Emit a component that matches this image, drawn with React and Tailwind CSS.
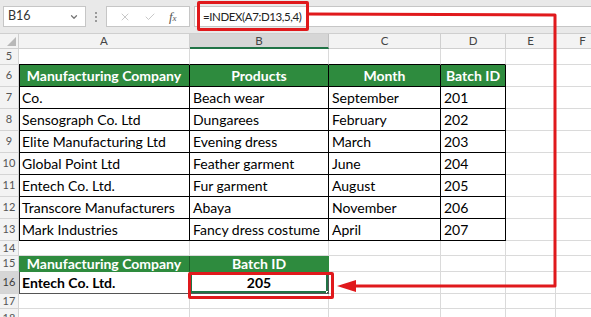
import { ChevronDown, X, Check } from "lucide-react";

const cols = [
  { key: "A", w: 171 },
  { key: "B", w: 139 },
  { key: "C", w: 112 },
  { key: "D", w: 65 },
  { key: "E", w: 50 },
  { key: "F", w: 54 },
];

const data = [
  ["Co.", "Beach wear", "September", "201"],
  ["Sensograph Co. Ltd", "Dungarees", "February", "202"],
  ["Elite Manufacturing Ltd", "Evening dress", "March", "203"],
  ["Global Point Ltd", "Feather garment", "June", "204"],
  ["Entech Co. Ltd.", "Fur garment", "August", "205"],
  ["Transcore Manufacturers", "Abaya", "November", "206"],
  ["Mark Industries", "Fancy dress costume", "April", "207"],
];

const font = { fontFamily: "Lato, 'Open Sans', sans-serif" };

function RowNum({ n, h, active }) {
  return (
    <div
      className={`w-[19px] shrink-0 flex items-center justify-center text-[11px] border-r border-b border-[#d4d4d4] ${
        active ? "bg-[#d6d6d6] text-[#3b3b3b]" : "bg-[#f3f3f3] text-[#555]"
      }`}
      style={{ height: h }}
    >
      {n}
    </div>
  );
}

function Cell({ w, children, className = "" }) {
  return (
    <div
      className={`shrink-0 flex items-center px-[3px] overflow-hidden whitespace-nowrap border-r border-b ${className}`}
      style={{ width: w }}
    >
      {children}
    </div>
  );
}

function EmptyCells({ from = 0 }) {
  return cols.slice(from).map((c) => (
    <Cell key={c.key} w={c.w} className="border-[#dadada]" />
  ));
}

export default function App() {
  return (
    <div className="relative w-[591px] h-[317px] overflow-hidden bg-white text-black" style={font}>
      {/* formula toolbar */}
      <div className="h-[34px] bg-[#e9e9e9] flex items-center border-b border-[#cfcfcf]">
        <div className="ml-[3px] w-[83px] h-[21px] bg-white border border-[#c6c6c6] flex items-center justify-between pl-[4px] pr-[6px] text-[12.5px] text-[#333]">
          <span>B16</span>
          <ChevronDown size={10} strokeWidth={3} className="text-[#777]" />
        </div>
        <div className="w-[20px] flex flex-col items-center gap-[2px]">
          <span className="w-[2px] h-[2px] bg-[#9a9a9a]" />
          <span className="w-[2px] h-[2px] bg-[#9a9a9a]" />
          <span className="w-[2px] h-[2px] bg-[#9a9a9a]" />
        </div>
        <div className="w-[84px] h-[21px] bg-white border border-[#c6c6c6] flex items-center justify-around px-[6px] text-[#b5b5b5]">
          <X size={12} strokeWidth={1.5} />
          <Check size={12} strokeWidth={1.5} />
          <span className="italic text-[13px] text-[#555]" style={{ fontFamily: "'Liberation Serif', serif" }}>
            f<span className="text-[9px]">x</span>
          </span>
        </div>
        <div className="ml-[4px] flex-1 h-[21px] bg-white border-y border-l border-[#c6c6c6] flex items-center pl-[8px] text-[11.5px] tracking-[-0.4px] text-[#222]">
          =INDEX(A7:D13,5,4)
        </div>
      </div>

      {/* column headers */}
      <div className="flex h-[15px] bg-[#f3f3f3] text-[11.5px] text-[#444]">
        <div className="w-[19px] shrink-0 border-r border-b border-[#cfcfcf] relative">
          <div className="absolute right-[2px] bottom-[2px] w-0 h-0 border-l-[9px] border-l-transparent border-b-[9px] border-b-[#b8b8b8]" />
        </div>
        {cols.map((c) => (
          <div
            key={c.key}
            className={`shrink-0 flex items-center justify-center border-r ${
              c.key === "B" ? "bg-[#d6d6d6] border-b-2 border-b-[#217346] border-r-[#c0c0c0]" : "border-b border-[#cfcfcf]"
            }`}
            style={{ width: c.w }}
          >
            {c.key}
          </div>
        ))}
        <div className="flex-1 border-b border-[#cfcfcf]" />
      </div>

      {/* row 5 */}
      <div className="flex h-[16px]">
        <RowNum n={5} h={16} />
        {cols.map((c, i) => (
          <Cell key={c.key} w={c.w} className={i < 4 ? "border-[#dadada] border-b-black" : "border-[#dadada]"} />
        ))}
      </div>

      {/* row 6 header */}
      <div className="flex h-[22px]">
        <RowNum n={6} h={22} />
        {["Manufacturing Company", "Products", "Month", "Batch ID"].map((t, i) => (
          <Cell
            key={t}
            w={cols[i].w}
            className={`justify-center bg-[#2e8b3e] text-white font-bold text-[14px] border-black ${i === 0 ? "shadow-[inset_1px_0_0_#000]" : ""}`}
          >
            {t}
          </Cell>
        ))}
        <EmptyCells from={4} />
      </div>

      {/* rows 7-13 */}
      {data.map((r, ri) => (
        <div key={ri} className="flex h-[22px]">
          <RowNum n={ri + 7} h={22} />
          {r.map((t, i) => (
            <Cell
              key={i}
              w={cols[i].w}
              className={`text-[14px] border-black ${i === 0 ? "shadow-[inset_1px_0_0_#000]" : ""}`}
            >
              {t}
            </Cell>
          ))}
          <EmptyCells from={4} />
        </div>
      ))}

      {/* row 14 */}
      <div className="flex h-[15px]">
        <RowNum n={14} h={15} />
        <EmptyCells />
      </div>

      {/* row 15 */}
      <div className="flex h-[16px]">
        <RowNum n={15} h={16} />
        {["Manufacturing Company", "Batch ID"].map((t, i) => (
          <Cell
            key={t}
            w={cols[i].w}
            className={`justify-center bg-[#2e8b3e] text-white font-bold text-[14px] border-[#2e8b3e] ${i === 0 ? "border-r-[#1d5e28]" : ""}`}
          >
            {t}
          </Cell>
        ))}
        <EmptyCells from={2} />
      </div>

      {/* row 16 */}
      <div className="flex h-[22px]">
        <RowNum n={16} h={22} active />
        <Cell w={cols[0].w} className="font-bold text-[14px] border-[#555] shadow-[inset_1px_0_0_#555]">
          Entech Co. Ltd.
        </Cell>
        <Cell w={cols[1].w} className="relative justify-center font-bold text-[14px] border-[#555] shadow-[inset_0_0_0_2px_#217346]">
          205
          <span className="absolute right-[-3px] bottom-[-3px] w-[5px] h-[5px] bg-[#217346] border border-white" />
        </Cell>
        <EmptyCells from={2} />
      </div>

      {/* row 17 */}
      <div className="flex h-[15px]">
        <RowNum n={17} h={15} />
        <EmptyCells />
      </div>

      {/* row 18 */}
      <div className="flex h-[20px]">
        <RowNum n={18} h={20} />
        <EmptyCells />
      </div>

      {/* red callouts */}
      <div className="absolute left-[197px] top-[1px] w-[112px] h-[30px] border-[3px] border-[#e0191c] rounded-[2px]" />
      <div className="absolute left-[188px] top-[272px] w-[146px] h-[27px] border-[3px] border-[#e0191c] rounded-[2px]" />
      <svg className="absolute left-0 top-0 pointer-events-none" width="591" height="317">
        <polyline
          points="309,14 555,15 555,286 352,286"
          fill="none"
          stroke="#e0191c"
          strokeWidth="3"
          strokeLinejoin="round"
        />
        <polygon points="337,286 356,280 356,292" fill="#e0191c" />
      </svg>
    </div>
  );
}
